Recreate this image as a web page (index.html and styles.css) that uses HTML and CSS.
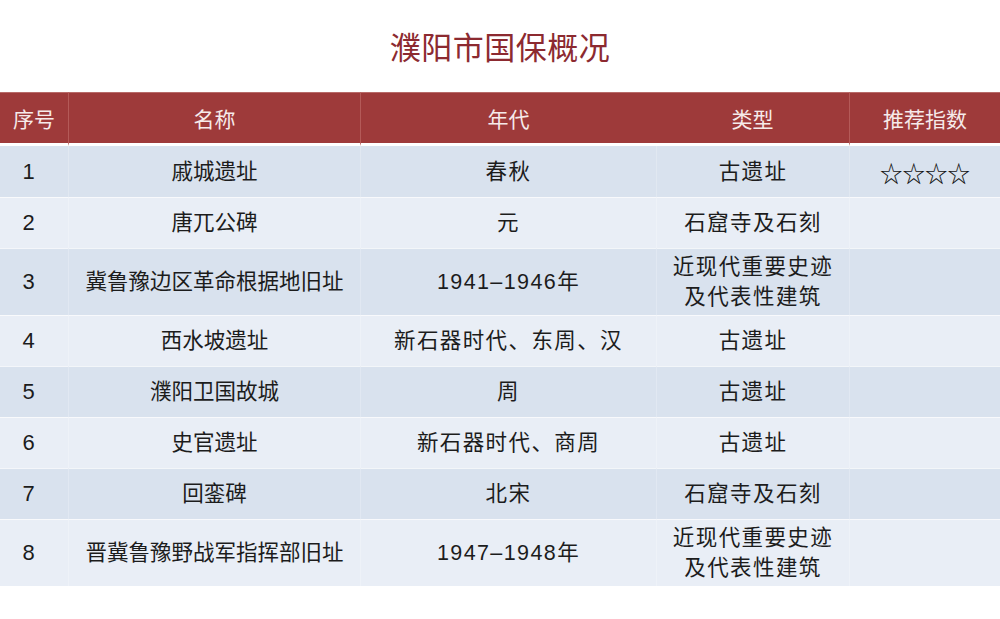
FILE: index.html
```html
<!DOCTYPE html>
<html lang="zh-CN">
<head>
<meta charset="utf-8">
<title>濮阳市国保概况</title>
<link rel="stylesheet" href="styles.css">
</head>
<body>
<div class="page">
  <h1 class="title">濮阳市国保概况</h1>
  <table class="tbl">
    <colgroup>
      <col class="c1"><col class="c2"><col class="c3"><col class="c4"><col class="c5">
    </colgroup>
    <thead>
      <tr><th>序号</th><th>名称</th><th class="nosep">年代</th><th>类型</th><th>推荐指数</th></tr>
    </thead>
    <tbody>
      <tr class="dark"><td class="num">1</td><td>戚城遗址</td><td class="sp">春秋</td><td class="sp">古遗址</td><td class="stars">☆☆☆☆</td></tr>
      <tr class="light"><td class="num">2</td><td>唐兀公碑</td><td class="sp">元</td><td class="sp">石窟寺及石刻</td><td></td></tr>
      <tr class="dark tall"><td class="num">3</td><td>冀鲁豫边区革命根据地旧址</td><td class="sp">1941–1946年</td><td class="sp">近现代重要史迹<br>及代表性建筑</td><td></td></tr>
      <tr class="light"><td class="num">4</td><td>西水坡遗址</td><td class="sp">新石器时代、东周、汉</td><td class="sp">古遗址</td><td></td></tr>
      <tr class="dark"><td class="num">5</td><td>濮阳卫国故城</td><td class="sp">周</td><td class="sp">古遗址</td><td></td></tr>
      <tr class="light"><td class="num">6</td><td>史官遗址</td><td class="sp">新石器时代、商周</td><td class="sp">古遗址</td><td></td></tr>
      <tr class="dark"><td class="num">7</td><td>回銮碑</td><td class="sp">北宋</td><td class="sp">石窟寺及石刻</td><td></td></tr>
      <tr class="light tall"><td class="num">8</td><td>晋冀鲁豫野战军指挥部旧址</td><td class="sp">1947–1948年</td><td class="sp">近现代重要史迹<br>及代表性建筑</td><td></td></tr>
    </tbody>
  </table>
</div>
</body>
</html>
```

FILE: styles.css
```css
html, body {
  margin: 0;
  padding: 0;
  background: #ffffff;
}

body {
  font-family: "Liberation Sans", "Noto Sans CJK SC", sans-serif;
  color: #1c1c1c;
}

.page {
  width: 1000px;
}

.title {
  margin: 0;
  height: 92px;
  box-sizing: border-box;
  padding-top: 26px;
  text-align: center;
  font-family: "Noto Sans CJK SC", sans-serif;
  font-weight: 400;
  font-size: 31px;
  line-height: 40px;
  color: #8c2a30;
  letter-spacing: 0.5px;
}

.tbl {
  width: 1000px;
  border-collapse: separate;
  border-spacing: 0;
  table-layout: fixed;
}

.c1 { width: 68px; }
.c2 { width: 292px; }
.c3 { width: 296px; }
.c4 { width: 193px; }
.c5 { width: 151px; }

.tbl th {
  height: 50px;
  padding: 0;
  background: #9e3a3a;
  color: #f6eaea;
  font-family: "Noto Sans CJK SC", sans-serif;
  font-weight: 400;
  font-size: 21px;
  text-align: center;
  vertical-align: middle;
  border-top: 1px solid #b86a68;
  border-left: 1px solid #b45a58;
  border-bottom: 3px solid #ffffff;
}

.tbl th:first-child {
  border-left: none;
}

.tbl th.nosep + th {
  border-left: none;
}

.tbl td {
  height: 46px;
  padding: 2px 0;
  font-size: 21.5px;
  line-height: 30px;
  text-align: center;
  vertical-align: middle;
  border-top: 1px solid rgba(255, 255, 255, 0.7);
  border-left: 1px solid rgba(255, 255, 255, 0.22);
}

.tbl td:first-child {
  border-left: none;
}

.tbl td.num {
  font-size: 22px;
  padding-right: 11px;
}

.tbl td.sp {
  letter-spacing: 1.4px;
}

.tbl tbody tr:first-child td {
  border-top: none;
  height: 47px;
}

.tbl tr.tall td {
  height: 62px;
}

.tbl tr.dark td {
  background: #d9e2ee;
}

.tbl tr.light td {
  background: #e9eef6;
}

.tbl td.stars {
  font-family: "Noto Sans CJK SC", sans-serif;
  font-size: 22.5px;
  color: #111;
}
```
